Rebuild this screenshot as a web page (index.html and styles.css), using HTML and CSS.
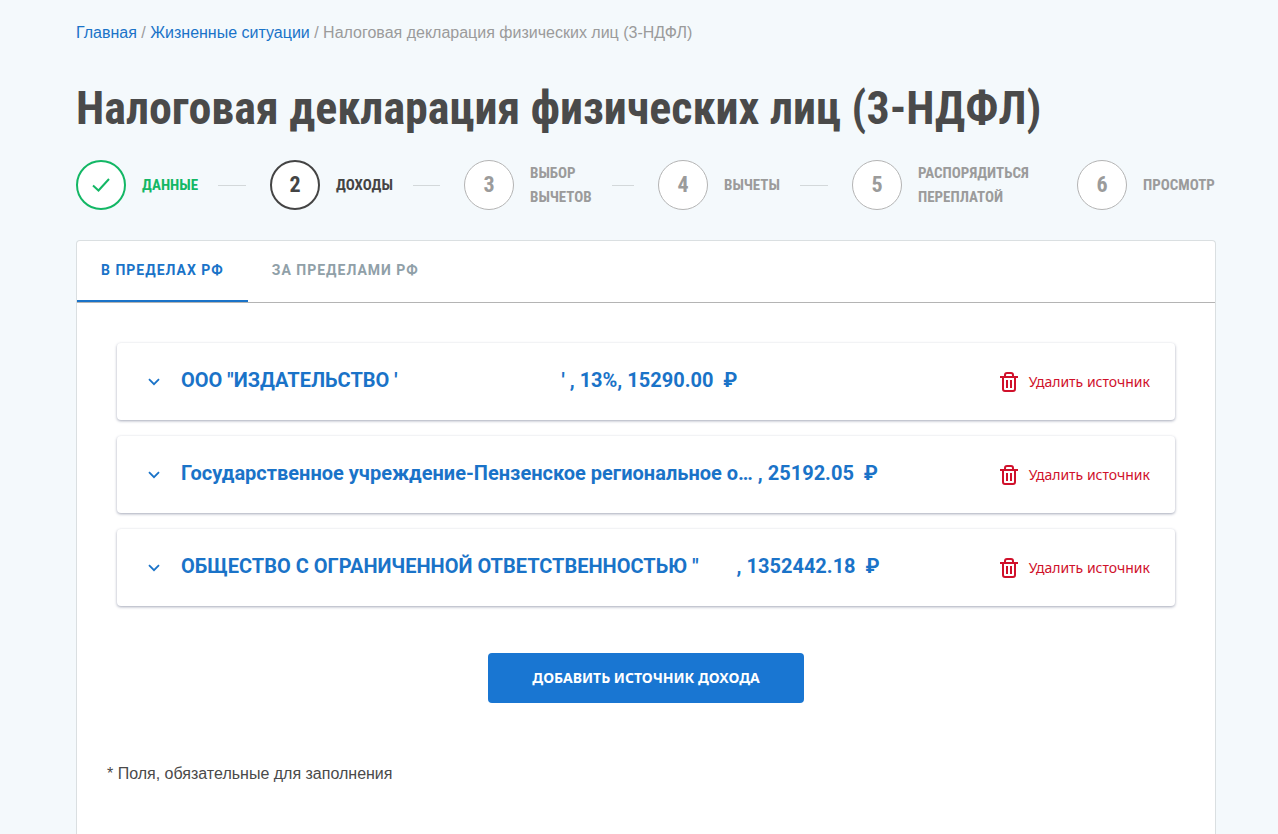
FILE: index.html
```html
<!DOCTYPE html>
<html lang="ru">
<head>
<meta charset="utf-8">
<meta name="viewport" content="width=device-width, initial-scale=1">
<title>Налоговая декларация физических лиц (3-НДФЛ)</title>
<link rel="stylesheet" href="styles.css">
</head>
<body>
<svg class="sprite" aria-hidden="true">
  <symbol id="chevron" viewBox="0 0 12 8"><path d="M1 1.200 6 6.200 11 1.200" fill="none" stroke="currentColor" stroke-width="1.800"/></symbol>
  <symbol id="trash" viewBox="0 0 18 20"><path d="M0 5h18M5 4.500V3q0-2 2-2h4q2 0 2 2v1.500M3 5v12q0 2 2 2h8q2 0 2-2V5M7 8v8M11 8v8" fill="none" stroke="currentColor" stroke-width="2"/></symbol>
</svg>
<div class="page">
  <nav class="breadcrumbs" aria-label="Навигация">
    <a href="#">Главная</a> / <a href="#">Жизненные ситуации</a> / <span>Налоговая декларация физических лиц (3-НДФЛ)</span>
  </nav>
  <h1 class="title">Налоговая декларация физических лиц (3-НДФЛ)</h1>
  <ol class="steps">
    <li class="step step-done"><span class="circle"><svg class="check" viewBox="0 0 18 14"><path d="M1 7.500 6.500 12.500 17 1" fill="none" stroke="currentColor" stroke-width="2"/></svg></span><span class="label">Данные</span><i class="line"></i></li>
    <li class="step step-current"><span class="circle">2</span><span class="label">Доходы</span><i class="line"></i></li>
    <li class="step"><span class="circle">3</span><span class="label">Выбор<br>вычетов</span><i class="line"></i></li>
    <li class="step"><span class="circle">4</span><span class="label">Вычеты</span><i class="line"></i></li>
    <li class="step"><span class="circle">5</span><span class="label">Распорядиться<br>переплатой</span></li>
    <li class="step"><span class="circle">6</span><span class="label">Просмотр</span></li>
  </ol>
  <main class="panel">
    <div class="tabs" role="tablist">
      <button class="tab tab-active" type="button" role="tab" aria-selected="true">В пределах РФ</button>
      <button class="tab" type="button" role="tab" aria-selected="false">За пределами РФ</button>
    </div>
    <div class="content">
      <div class="sources">
        <section class="source">
          <button class="source-toggle" type="button"><svg class="chevron"><use href="#chevron"/></svg><span class="source-name">ООО "ИЗДАТЕЛЬСТВО '<span class="blank blank-wide"></span>' , 13%, 15290.00 &nbsp;₽</span></button>
          <button class="delete" type="button"><svg class="trash"><use href="#trash"/></svg>Удалить источник</button>
        </section>
        <section class="source">
          <button class="source-toggle" type="button"><svg class="chevron"><use href="#chevron"/></svg><span class="source-name">Государственное учреждение-Пензенское региональное о… , 25192.05 &nbsp;₽</span></button>
          <button class="delete" type="button"><svg class="trash"><use href="#trash"/></svg>Удалить источник</button>
        </section>
        <section class="source">
          <button class="source-toggle" type="button"><svg class="chevron"><use href="#chevron"/></svg><span class="source-name">ОБЩЕСТВО С ОГРАНИЧЕННОЙ ОТВЕТСТВЕННОСТЬЮ "<span class="blank"></span>, 1352442.18 &nbsp;₽</span></button>
          <button class="delete" type="button"><svg class="trash"><use href="#trash"/></svg>Удалить источник</button>
        </section>
      </div>
      <button class="add" type="button">Добавить источник дохода</button>
    </div>
    <p class="note">* Поля, обязательные для заполнения</p>
  </main>
</div>
</body>
</html>
```
FILE: styles.css
```css
* { box-sizing: border-box; }
body { margin: 0; background: #f4f9fc; color: #4a4a4a; font: 16px/24px "Liberation Sans", Arial, sans-serif; }
button { border: 0; background: none; padding: 0; cursor: pointer; }
.sprite { display: none; }
.page { display: flex; flex-direction: column; min-height: 100vh; padding: 21px 62px 0 76px; }
.breadcrumbs { color: #9b9b9b; }
.breadcrumbs a { color: #1a73c8; text-decoration: none; }
.title { margin: 27px 0 16px; font: bold 46px/72px "Roboto Condensed", "Liberation Sans Narrow", "Liberation Sans", sans-serif; }
.steps { display: grid; grid-template-columns: 194fr 194fr 194fr 194fr 225fr 139fr; margin: 0 0 30px; padding: 0; list-style: none; color: #9b9b9b; font: bold 15px/24px "Roboto Condensed", "Liberation Sans Narrow", "Liberation Sans", sans-serif; }
.step { display: flex; align-items: center; min-width: 0; }
.circle { display: flex; flex: none; align-items: center; justify-content: center; width: 50px; height: 50px; margin-right: 16px; border: 1px solid #b4b4b4; border-radius: 50%; background: #fff; font-size: 22px; }
.label { text-transform: uppercase; }
.line { flex: 1; height: 1px; margin: 0 24px 0 20px; background: #d3d8da; }
.step-done { color: #13b765; }
.step-current { color: #444; }
.step-done .circle, .step-current .circle { border: 2px solid currentColor; }
.check { width: 18px; height: 14px; }
.panel { flex: 1; border: 1px solid #dadfe1; border-bottom: 0; border-radius: 4px 4px 0 0; background: #fff; }
.tabs { display: flex; border-bottom: 1px solid #b4b4b4; }
.tab { height: 61px; padding: 0 24px 2px; border-bottom: 2px solid transparent; color: #90a0a8; font: bold 14px/20px Roboto, sans-serif; letter-spacing: 1px; text-transform: uppercase; }
.tab-active { border-bottom-color: #1a73c8; color: #1a73c8; }
.content { display: flex; flex-direction: column; align-items: center; padding: 40px 40px 0; }
.sources { display: flex; flex-direction: column; gap: 16px; width: 100%; }
.source { display: flex; align-items: center; justify-content: space-between; min-height: 77px; padding: 0 25px 0 31px; border-radius: 4px; box-shadow: 0 1px 3px rgba(30, 40, 80, .4); }
.source-toggle { display: flex; align-items: center; gap: 21px; color: #1a73c8; font: bold 20px/28px Roboto, sans-serif; text-align: left; }
.source-name { padding-bottom: 4px; }
.blank { display: inline-block; width: 38px; }
.blank-wide { width: 164px; }
.chevron { flex: none; width: 12px; height: 8px; }
.delete { display: flex; align-items: center; gap: 11px; color: #d0112b; font: 14px/20px "Noto Sans", sans-serif; }
.trash { width: 18px; height: 20px; }
.add { min-height: 50px; margin-top: 47px; padding: 0 44px; border-radius: 4px; background: #1976d2; color: #fff; font: bold 14px/20px "Noto Sans", sans-serif; text-transform: uppercase; }
.note { margin: 59px 30px 48px; }
```
